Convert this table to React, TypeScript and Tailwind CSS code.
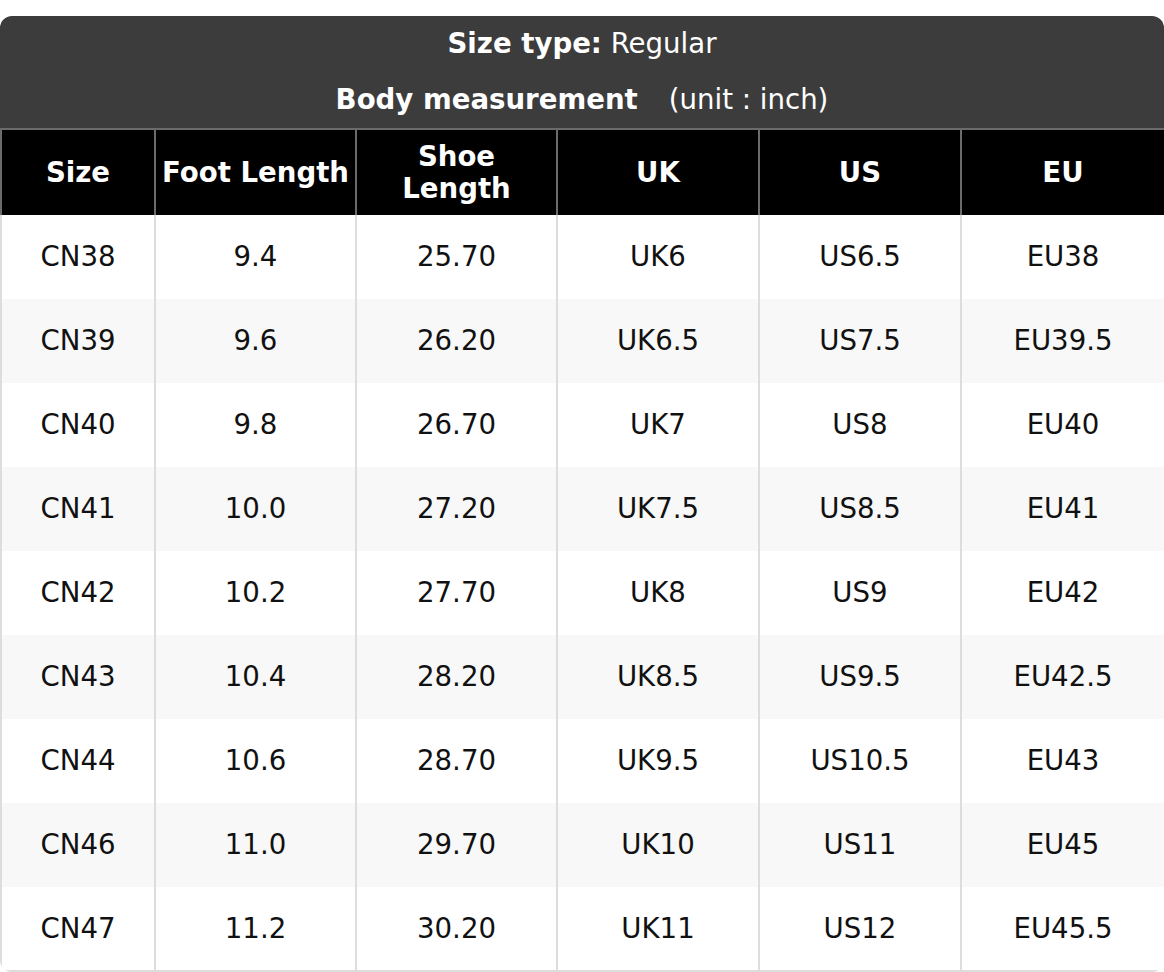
const HEADERS = ["Size", "Foot Length", "Shoe Length", "UK", "US", "EU"];

const ROWS: string[][] = [
  ["CN38", "9.4", "25.70", "UK6", "US6.5", "EU38"],
  ["CN39", "9.6", "26.20", "UK6.5", "US7.5", "EU39.5"],
  ["CN40", "9.8", "26.70", "UK7", "US8", "EU40"],
  ["CN41", "10.0", "27.20", "UK7.5", "US8.5", "EU41"],
  ["CN42", "10.2", "27.70", "UK8", "US9", "EU42"],
  ["CN43", "10.4", "28.20", "UK8.5", "US9.5", "EU42.5"],
  ["CN44", "10.6", "28.70", "UK9.5", "US10.5", "EU43"],
  ["CN46", "11.0", "29.70", "UK10", "US11", "EU45"],
  ["CN47", "11.2", "30.20", "UK11", "US12", "EU45.5"],
];

const COL_WIDTHS = ["w-[154px]", "w-[201px]", "w-[201px]", "w-[202px]", "w-[202px]", "w-[204px]"];

export default function App() {
  return (
    <div className="min-h-screen bg-white pt-4 font-['DejaVu_Sans',sans-serif] text-[27.6px]">
      <div className="w-[1164px] overflow-hidden rounded-t-xl rounded-b-xl">
        {/* title block */}
        <div className="bg-[#3c3c3c] text-center text-white">
          <div className="py-3 leading-[32px]">
            <span className="font-bold">Size type:</span> Regular
          </div>
          <div className="py-3 leading-[32px]">
            <span className="font-bold">Body measurement</span>
            <span className="ml-[31px]">(unit : inch)</span>
          </div>
        </div>

        <table className="w-full table-fixed border-collapse">
          <colgroup>
            {COL_WIDTHS.map((w, i) => (
              <col key={i} className={w} />
            ))}
          </colgroup>
          <thead>
            <tr className="h-[86px] bg-black">
              {HEADERS.map((h) => (
                <th
                  key={h}
                  className="border-2 border-b-0 border-[#6b6b6b] px-1 text-center font-bold leading-[32px] text-white"
                >
                  {h}
                </th>
              ))}
            </tr>
          </thead>
          <tbody>
            {ROWS.map((row, i) => (
              <tr key={row[0]} className={`h-[84px] ${i % 2 === 1 ? "bg-[#f8f8f8]" : "bg-white"}`}>
                {row.map((cell, j) => (
                  <td
                    key={j}
                    className={`border-x-2 border-[#dddddd] text-center font-normal text-[#111] ${
                      i === ROWS.length - 1 ? "border-b-2" : ""
                    }`}
                  >
                    {cell}
                  </td>
                ))}
              </tr>
            ))}
          </tbody>
        </table>
      </div>
    </div>
  );
}
